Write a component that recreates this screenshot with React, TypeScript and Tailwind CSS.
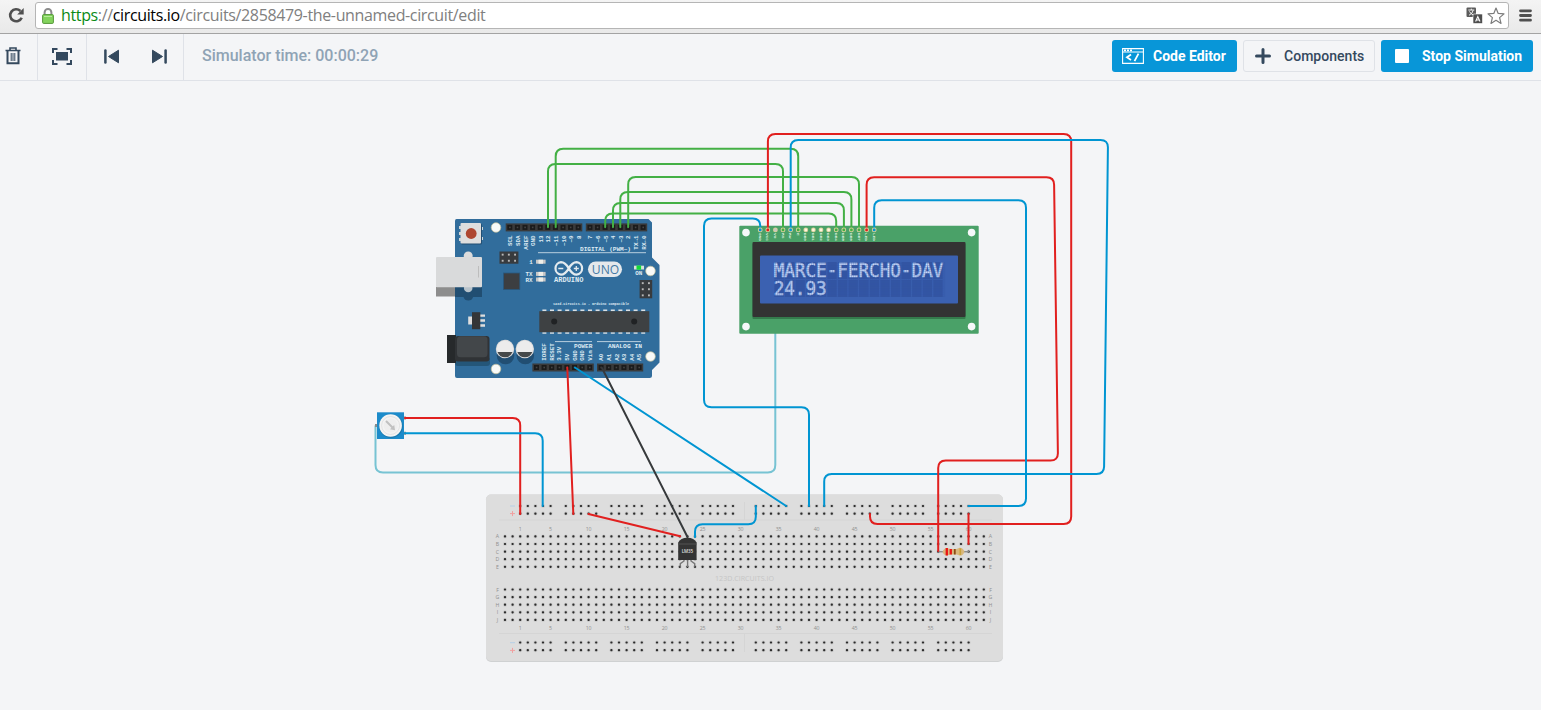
import React from "react";

type Point = [number, number];

const PITCH = 7.6;
const X0 = 505;
const col = (n: number) => X0 + n * PITCH;
const TOP_ROWS = [536.4, 544, 551.6, 559.2, 566.8];
const BOTTOM_ROWS = [589.5, 597.1, 604.7, 612.3, 619.9];
const RAIL_ROWS = [506, 513.6, 642.5, 650.2];
const RAIL_GROUPS = [2, 8, 14, 20, 26, 33, 39, 45, 51, 57];
const MONO = '"Liberation Mono", monospace';
const LABEL = '"Open Sans", sans-serif';

function rounded(points: Point[], r = 7.5) {
  let d = `M${points[0][0]} ${points[0][1]}`;
  for (let i = 1; i < points.length - 1; i++) {
    const [ax, ay] = points[i - 1];
    const [bx, by] = points[i];
    const [cx, cy] = points[i + 1];
    const la = Math.hypot(ax - bx, ay - by);
    const lc = Math.hypot(cx - bx, cy - by);
    const q = Math.min(r, la, lc);
    d += `L${bx + ((ax - bx) * q) / la} ${by + ((ay - by) * q) / la}`;
    d += `Q${bx} ${by} ${bx + ((cx - bx) * q) / lc} ${by + ((cy - by) * q) / lc}`;
  }
  const end = points[points.length - 1];
  return `${d}L${end[0]} ${end[1]}`;
}

function Wire({ color, points }: { color: string; points: Point[] }) {
  return <path d={rounded(points)} fill="none" stroke={color} strokeWidth={2} strokeLinecap="round" />;
}

const GREEN = "#43b045";
const RED = "#e1201f";
const BLUE = "#0095d2";

function Hole({ x, y }: { x: number; y: number }) {
  return (
    <g>
      <circle cx={x} cy={y} r={2} fill="#cbcbcb" />
      <rect x={x - 1.1} y={y - 1.1} width={2.2} height={2.2} rx={0.8} fill="#2c2c2c" />
    </g>
  );
}

function Breadboard() {
  const columns = Array.from({ length: 64 }, (_, i) => i);
  const numbers = [1, 5, 10, 15, 20, 25, 30, 35, 40, 45, 50, 55, 60];
  return (
    <g>
      <rect x={486} y={494.5} width={517} height={167.5} rx={5} fill="#cfd1d2" />
      <rect x={486} y={494.5} width={517} height={166.5} rx={5} fill="#dddddd" />
      <path d="M499 520H992M499 633.5H992M744.5 502v18M744.5 634v18" stroke="#d5d5d5" strokeWidth={1} />
      {columns.map((c) => [...TOP_ROWS, ...BOTTOM_ROWS].map((y) => <Hole key={`${c}-${y}`} x={col(c)} y={y} />))}
      {RAIL_GROUPS.map((g) =>
        [0, 1, 2, 3, 4].map((k) => RAIL_ROWS.map((y) => <Hole key={`${g}-${k}-${y}`} x={col(g + k)} y={y} />))
      )}
      <g fontFamily={LABEL} fontSize={5.2} fill="#909090" textAnchor="middle">
        {numbers.map((n) => (
          <g key={n}>
            <text x={col(n + 1)} y={531.3}>{n}</text>
            <text x={col(n + 1)} y={630}>{n}</text>
          </g>
        ))}
        {["A", "B", "C", "D", "E", "F", "G", "H", "I", "J"].map((l, i) => {
          const y = [...TOP_ROWS, ...BOTTOM_ROWS][i] + 2;
          return (
            <g key={l}>
              <text x={497.5} y={y}>{l}</text>
              <text x={990.5} y={y}>{l}</text>
            </g>
          );
        })}
      </g>
      <text x={744.5} y={581} fontFamily={LABEL} fontSize={7.8} fill="#c6c6c6" textAnchor="middle" textLength={59} lengthAdjust="spacingAndGlyphs">123D.CIRCUITS.IO</text>
      <path d="M510 506h5M510 642.7h5" stroke="#b5cfe6" strokeWidth={1} />
      <path d="M510 513.6h5M512.5 511.1v5M510 650.4h5M512.5 647.9v5" stroke="#f0a0a0" strokeWidth={1} />
    </g>
  );
}

function Header({ x, y, count }: { x: number; y: number; count: number }) {
  return (
    <g>
      <rect x={x} y={y} width={count * PITCH + 0.6} height={8} fill="#3a3a3a" />
      {Array.from({ length: count }, (_, i) => (
        <g key={i}>
          <rect x={x + 1.6 + i * PITCH} y={y + 1.5} width={5} height={5} fill="#1b1b1b" />
          <rect x={x + 3.4 + i * PITCH} y={y + 3.2} width={1.6} height={1.6} fill="#454545" />
        </g>
      ))}
    </g>
  );
}

function VText({ x, y, children, end }: { x: number; y: number; children: string; end?: boolean }) {
  return (
    <text transform={`translate(${x + 1.9} ${y}) rotate(-90)`} textAnchor={end ? "end" : "start"}>{children}</text>
  );
}

function PinBlock({ x, y, rows, cols }: { x: number; y: number; rows: number; cols: number }) {
  return (
    <g>
      <rect x={x} y={y} width={cols * 6.3} height={rows * 6.1} fill="#383b3e" />
      {Array.from({ length: rows * cols }, (_, i) => (
        <rect key={i} x={x + 2.2 + (i % cols) * 6.2} y={y + 2.2 + Math.floor(i / cols) * 6.1} width={1.9} height={1.9} fill="#b9b9b9" />
      ))}
    </g>
  );
}

function Arduino() {
  const topLeft = ["SCL", "SDA", "AREF", "GND", "13", "12", "~11", "~10", "~9", "8"];
  const topRight = ["7", "~6", "~5", "4", "~3", "2", "TX→1", "RX←0"];
  const power = ["IOREF", "RESET", "3.3V", "5V", "GND", "GND", "Vin"];
  return (
    <g>
      <path d="M456.5 219H648.5L652 222.5V257.5L659.5 265V362.5L652 370V375.5Q652 378 649.5 378H457Q455 378 455 376V221Q455 219 456.5 219Z" fill="#316d9c" />
      {/* USB socket */}
      <circle cx={468.2} cy={256} r={4.5} fill="#dcdcdc" />
      <path d="M463.5 297a5 5 0 0 0 9.6 0Z" fill="#214e72" />
      <rect x={436} y={287} width={19} height={9.5} fill="#8d8d8d" />
      <rect x={455} y={287} width={27} height={10} fill="#214e72" />
      <circle cx={468.2} cy={288} r={4.3} fill="#b8c3cb" />
      <rect x={436} y={257} width={46} height={30.3} rx={1} fill="#d9dadb" />
      <path d="M478.5 266v11.5" stroke="#bdbdbd" />
      {/* reset button */}
      <path d="M459 226h4v3h-4ZM459 232h4v3h-4ZM459 238h4v3h-4ZM480 227h3v3h-3ZM480 237h3v3h-3Z" fill="#cfd5d8" />
      <rect x={461} y={223.5} width={21} height={21} rx={1.5} fill="#234f73" />
      <rect x={460.5} y={223} width={20.5} height={20.5} rx={1} fill="#dedede" />
      <circle cx={471.2} cy={233.5} r={5.4} fill="#ae4630" />
      {([[496, 227.5], [650.5, 271], [650.5, 356.5], [496, 369]] as Point[]).map(([x, y]) => (
        <circle key={`${x}-${y}`} cx={x} cy={y} r={4.8} fill="#f8faf8" stroke="#c1bd98" strokeWidth={0.7} />
      ))}
      <Header x={505.7} y={223.4} count={10} />
      <Header x={585.8} y={223.4} count={8} />
      <Header x={532.4} y={363.5} count={8} />
      <Header x={597} y={363.5} count={6} />
      <g fontFamily={MONO} fontWeight={700} fontSize={5.9} fill="#dfebf3">
        {topLeft.map((t, i) => <VText key={t} x={510.5 + i * PITCH} y={235.5} end>{t}</VText>)}
        {topRight.map((t, i) => <VText key={t} x={590.4 + i * PITCH} y={235.5} end>{t}</VText>)}
        {power.map((t, i) => <VText key={i} x={544.2 + i * PITCH} y={360.8}>{t}</VText>)}
        {["A0", "A1", "A2", "A3", "A4", "A5"].map((t, i) => <VText key={t} x={601.4 + i * PITCH} y={360.8}>{t}</VText>)}
        <text x={580} y={250.7} textLength={51} lengthAdjust="spacingAndGlyphs">DIGITAL (PWM~)</text>
        <text x={574} y={348} textLength={18.3} lengthAdjust="spacingAndGlyphs">POWER</text>
        <text x={608} y={348} textLength={34} lengthAdjust="spacingAndGlyphs">ANALOG IN</text>
        <text x={529.3} y={263.5}>1</text>
        <text x={525.5} y={275.7}>TX</text>
        <text x={525.5} y={281.7}>RX</text>
        <text x={635.2} y={275.2}>ON</text>
        <text x={553} y={305.1} fontSize={4.1} textLength={76} lengthAdjust="spacingAndGlyphs">123d.circuits.io - arduino compatible</text>
        <text x={554} y={281.7} fontSize={6.3} textLength={29.5} lengthAdjust="spacingAndGlyphs">ARDUINO</text>
      </g>
      <path d="M538 252.7H646M555 341.6h37M597 341.6h44" stroke="#c7dae6" strokeWidth={0.9} />
      <PinBlock x={499.5} y={251.5} rows={2} cols={3} />
      <PinBlock x={639.6} y={280} rows={3} cols={2} />
      <rect x={503.5} y={273} width={16.3} height={16.5} fill="#3c3e41" stroke="#28587e" strokeWidth={0.8} />
      {[261.5, 273.7, 279.3].map((y) => (
        <g key={y}>
          <rect x={536} y={y - 1.8} width={9.6} height={4} fill="#c7c7c7" />
          <rect x={538.5} y={y - 1.8} width={4.5} height={4} fill="#efeee8" />
        </g>
      ))}
      <path d="M568.8 268.4C566.5 264.5 564.5 262.2 561 262.2A6.3 6.3 0 0 0 561 274.7C564.5 274.7 566.5 272.3 568.8 268.4C571 264.5 573 262.2 576.6 262.2A6.3 6.3 0 0 1 576.6 274.7C573 274.7 571 272.3 568.8 268.4Z" fill="none" stroke="#e4ebef" strokeWidth={2.2} />
      <path d="M558.3 268.5h5M573.8 268.5h5M576.3 266v5" stroke="#e4ebef" strokeWidth={1.3} />
      <rect x={588} y={261.5} width={34} height={15.5} rx={7.75} fill="#e5e9ec" />
      <text x={591.8} y={274} fontFamily={LABEL} fontSize={13} fill="#447aa4" textLength={27.4} lengthAdjust="spacingAndGlyphs">UNO</text>
      <rect x={634} y={265.7} width={10} height={3.8} fill="#d6e2d9" />
      <rect x={636.5} y={265.5} width={4.6} height={4.2} fill="#12dd39" />
      {/* microcontroller */}
      {Array.from({ length: 14 }, (_, i) => (
        <path key={i} d={`M${542.4 + i * 7.6} 310.4h4M${542.4 + i * 7.6} 333h4`} stroke="#dbe1e5" strokeWidth={1.6} />
      ))}
      <rect x={539.3} y={311.2} width={110} height={21} fill="#3e4143" />
      <circle cx={554.2} cy={321.5} r={3} fill="#202224" />
      <circle cx={634.2} cy={321.5} r={3} fill="#202224" />
      {/* regulator, power jack, capacitors */}
      <rect x={468.2} y={316.5} width={4} height={8} fill="#dedede" />
      <path d="M480 315.7h5M480 320.5h5M480 325.5h5" stroke="#dedede" strokeWidth={2.3} />
      <rect x={472} y={312.2} width={8.3} height={17} fill="#343638" />
      <rect x={455} y={357} width={35} height={9} rx={3} fill="#245679" />
      <rect x={447} y={335} width={9} height={28} fill="#26292b" />
      <rect x={455} y={336} width={34.5} height={25.5} rx={3} fill="#303336" />
      <rect x={457} y={336.3} width={30.5} height={21} rx={3.5} fill="#43474a" />
      {[505, 524.8].map((x) => (
        <g key={x}>
          <circle cx={x + 0.5} cy={355.5} r={8.8} fill="#214e72" />
          <circle cx={x} cy={349} r={9.2} fill="#dddddd" />
          <circle cx={x} cy={348.7} r={8} fill="#ececec" />
          <path d={`M${x - 7.5} 352a8 8 0 0 0 15 0Z`} fill="#45494a" />
        </g>
      ))}
    </g>
  );
}

const LCD_PINS: [string, string][] = [
  ["GND", BLUE], ["VCC", RED], ["VO", "#c7c7c7"], ["RS", GREEN], ["RW", BLUE], ["E", GREEN], ["DB0", "#fff6df"], ["DB1", "#fff6df"],
  ["DB2", "#fff6df"], ["DB3", "#fff6df"], ["DB4", GREEN], ["DB5", GREEN], ["DB6", GREEN], ["DB7", GREEN], ["LED", RED], ["LED", BLUE],
];

function LcdLine({ text, y }: { text: string; y: number }) {
  return (
    <text transform={`translate(773.7 ${y}) scale(0.905 1)`} fontFamily='"DejaVu Sans Mono", monospace' fontSize={19.6} fill="#d3e2ff" stroke="#d3e2ff" strokeWidth={0.45} textLength={(text.length * 10.6) / 0.905} lengthAdjust="spacing">
      {text}
    </text>
  );
}

function Lcd() {
  return (
    <g>
      <rect x={739.3} y={225.7} width={239.4} height={108} rx={1} fill="#4aa168" />
      {([[746, 232.6], [971.6, 232.6], [746, 326.6], [971.6, 326.6]] as Point[]).map(([x, y]) => (
        <circle key={`${x}-${y}`} cx={x} cy={y} r={3.8} fill="#f6f8fa" />
      ))}
      {LCD_PINS.map(([label], i) => (
        <text key={i} transform={`translate(${758.7 + i * 7.6} 233)  rotate(90)`} fontFamily={MONO} fontWeight={700} fontSize={4.4} fill="#d4eadb">{label}</text>
      ))}
      <rect x={752.5} y={243.5} width={213} height={75.5} rx={1} fill="#347b4c" />
      <rect x={752.5} y={242} width={213} height={75} rx={1} fill="#333333" />
      <rect x={760} y={255.5} width={198} height={48} rx={1} fill="#3b61b1" />
      {Array.from({ length: 32 }, (_, i) => (
        <rect key={i} x={774.4 + (i % 16) * 10.6} y={262 + Math.floor(i / 16) * 18} width={9.2} height={17} fill="#3456a4" />
      ))}
      <LcdLine text="MARCE-FERCHO-DAV" y={276.9} />
      <LcdLine text="24.93" y={294.7} />
      <path d={Array.from({ length: 90 }, (_, i) => `M${775.5 + i * 1.9} 262v35`).join("")} stroke="#3456a4" strokeWidth={0.3} />
      <path d={Array.from({ length: 17 }, (_, i) => `M774 ${263.5 + i * 2.05}h170`).join("")} stroke="#3456a4" strokeWidth={0.3} />
    </g>
  );
}

function LcdPins() {
  return (
    <g>
      {LCD_PINS.map(([, color], i) => (
        <g key={i}>
          <circle cx={760.2 + i * 7.6} cy={229.9} r={2.4} fill="#d8cf9b" />
          <rect x={758.9 + i * 7.6} y={228.6} width={2.6} height={2.6} rx={0.8} fill={color} />
        </g>
      ))}
    </g>
  );
}

function Potentiometer() {
  return (
    <g>
      <rect x={377} y={412.3} width={27} height={26.7} fill="#1c8bca" />
      <path d="M404 418h2M404 433.3h2M375 425.6h2" stroke="#8b8b8b" strokeWidth={3} />
      <circle cx={391} cy={426.2} r={11.8} fill="#1878ad" />
      <circle cx={390.6} cy={425.5} r={11.3} fill="#f3f3f3" />
      <circle cx={390.6} cy={425.5} r={9} fill="none" stroke="#dedede" strokeWidth={0.8} />
      <circle cx={390.6} cy={425.5} r={7} fill="#eeeeee" />
      <path d="M386 421l6.5 6.5" stroke="#c0c0c0" strokeWidth={2} />
      <path d="M395 430.3l-.8-5.2-4.2 4.2Z" fill="#c0c0c0" />
    </g>
  );
}

function Sensor() {
  return (
    <g>
      <path d="M684 559v2l-3.7 2.6v3.2M687.6 559v8M691 559v2l3.7 2.6v3.2" fill="none" stroke="#777777" strokeWidth={1.4} />
      <path d="M678.2 560V542.5Q680.5 537.8 687.4 537.8T696.6 542.5V560Z" fill="#343434" />
      <path d="M678.2 544H696.6" stroke="#5a5a5a" strokeWidth={0.8} />
      <text x={687.4} y={553.4} fontFamily={LABEL} fontWeight={600} fontSize={4.7} fill="#e4e4e4" textAnchor="middle" textLength={11.5} lengthAdjust="spacingAndGlyphs">LM35</text>
    </g>
  );
}

function Resistor() {
  return (
    <g>
      <path d="M938 551.7h31" stroke="#8d8d8d" strokeWidth={1.4} />
      <path d="M942.5 551.7q1.5-4 4.5-3.8l3.5 1h6l3-1.1q3.5-.2 5 3.9-1.5 4.1-5 3.9l-3-1.1h-6l-3.5 1q-3 .2-4.5-3.8Z" fill="#d9b77c" />
      <path d="M946.8 548v7.4M950.8 549v5.5" stroke="#ea1515" strokeWidth={2.3} />
      <path d="M954.8 549v5.5" stroke="#8b4b17" strokeWidth={1.8} />
      <path d="M960.3 548.3v6.8" stroke="#c8a23b" strokeWidth={1.6} />
    </g>
  );
}

function Circuit() {
  return (
    <svg className="block h-[629px] w-[1541px]" viewBox="0 81 1541 629">
      <Wire color="#77c3d3" points={[[775.3, 230], [775.3, 472.5], [375.5, 472.5], [375.5, 426]]} />
      <Breadboard />
      <Arduino />
      <Lcd />
      <Potentiometer />
      <Resistor />
      <Wire color={GREEN} points={[[555.7, 227], [555.7, 148.8], [798.2, 148.8], [798.2, 230]]} />
      <Wire color={GREEN} points={[[548, 227], [548, 164], [783, 164], [783, 230]]} />
      <Wire color={GREEN} points={[[628.2, 227], [628.2, 177], [859, 177], [859, 230]]} />
      <Wire color={GREEN} points={[[620.3, 227], [620.3, 191.9], [851.4, 191.9], [851.4, 230]]} />
      <Wire color={GREEN} points={[[613, 227], [613, 203.1], [843.9, 203.1], [843.9, 230]]} />
      <Wire color={GREEN} points={[[605.2, 227], [605.2, 213.5], [836.2, 213.5], [836.2, 230]]} />
      <Wire color={RED} points={[[767.9, 230], [767.9, 133.9], [1071.2, 133.9], [1071.2, 523.9], [870, 523.9], [870, 514]]} />
      <Wire color={BLUE} points={[[790.7, 230], [790.7, 140], [1108, 140], [1104, 474], [824.2, 474], [824.2, 506]]} />
      <Wire color={RED} points={[[866.6, 230], [866.6, 177.2], [1054, 177.2], [1058, 460.5], [938.2, 460.5], [938.2, 551]]} />
      <Wire color={BLUE} points={[[874.2, 230], [874.2, 200.3], [1026, 200.3], [1026, 506], [968.5, 506]]} />
      <Wire color={BLUE} points={[[760.3, 230], [760.3, 218.5], [704, 218.5], [704, 407.2], [809, 407.2], [809, 506]]} />
      <Wire color={RED} points={[[405, 418.1], [520.2, 418.1], [520.2, 514]]} />
      <Wire color={BLUE} points={[[405, 433.3], [542.7, 433.3], [542.7, 506]]} />
      <Wire color={RED} points={[[567.3, 367.5], [573.3, 514]]} />
      <Wire color={BLUE} points={[[574.9, 367.5], [786.2, 506]]} />
      <Wire color="#373a3c" points={[[602, 368], [687.5, 537]]} />
      <Wire color={RED} points={[[588.5, 514], [680.2, 536.3]]} />
      <Wire color={BLUE} points={[[695, 537], [695, 524.2], [755.8, 524.2], [755.8, 506]]} />
      <Wire color={RED} points={[[968.5, 514], [968.5, 544]]} />
      <LcdPins />
      <Sensor />
    </svg>
  );
}

function BrowserBar() {
  return (
    <header className="flex h-[34px] items-start border-b border-[#a3a3a3] bg-gradient-to-b from-[#f4f4f4] to-[#e9e9e9] pt-[2px]">
      <div className="flex h-[26px] w-[35px] shrink-0 items-center pl-[8px]">
        <svg className="size-[17px]" viewBox="0 0 17 17">
          <path d="M13.7 10.7A6 6 0 1 1 12.4 4" fill="none" stroke="#505050" strokeWidth="2.6" />
          <path d="M15.7 1v6.6H9.2Z" fill="#505050" />
        </svg>
      </div>
      <div className="flex h-[27px] w-[1474px] shrink-0 items-center rounded-[3px] border border-[#b5b5b5] bg-white pl-[6px] pr-[3px]">
        <svg className="mr-[7px] h-[16px] w-[12px] shrink-0" viewBox="0 0 12 16">
          <path d="M2.6 8V4.4a3.4 3.4 0 0 1 6.8 0V8" fill="none" stroke="#8b8b8b" strokeWidth="2" />
          <rect x=".6" y="6.6" width="10.8" height="8.8" rx="1" fill="#83d35d" stroke="#55983b" />
          <path d="M2 8.5h8" stroke="#b6eb9b" />
        </svg>
        <div className="flex-1 whitespace-nowrap pb-px font-['Open_Sans',sans-serif] text-[16px] leading-[22px] tracking-[-0.355px] text-[#808080]">
          <span className="text-[#0b8a16]">https</span>://<span className="text-black">circuits.io</span>/circuits/2858479-the-unnamed-circuit/edit
        </div>
        <svg className="mr-[4px] h-[17px] w-[17px]" viewBox="0 0 17 17">
          <rect x=".5" y=".5" width="9.5" height="9.5" rx="1" fill="#5b5b5b" />
          <path d="M2.3 3h6M5.3 1.6V3M3 8.3Q6.7 6.5 7.2 3.2M3.4 4.4Q4.8 7.3 8 8.3" fill="none" stroke="#fff" strokeWidth=".9" />
          <rect x="7" y="7" width="9.5" height="9.5" rx="1" fill="#4f4f4f" stroke="#fff" strokeWidth=".6" />
          <path d="M9.6 14.5l2.2-5 2.2 5M10.4 13h2.8" fill="none" stroke="#fff" strokeWidth="1.1" />
        </svg>
        <svg className="size-[18px]" viewBox="0 0 18 18">
          <path d="M9 1l2.2 5.4 5.8.5-4.4 3.7 1.4 5.8L9 13.3l-5 3.1 1.4-5.8L1 6.9l5.8-.5Z" fill="#fff" stroke="#7c7c7c" strokeWidth="1.2" strokeLinejoin="round" />
        </svg>
      </div>
      <div className="flex h-[26px] flex-1 items-center pl-[10px]">
        <svg className="h-[13px] w-[13px]" viewBox="0 0 13 13">
          <path d="M1.5 1.8h10M1.5 6.5h10M1.5 11.2h10" stroke="#4f4f4f" strokeWidth="2.8" strokeLinecap="round" />
        </svg>
      </div>
    </header>
  );
}

function SimulatorBar() {
  return (
    <nav className="flex h-[47px] border-b border-[#dfe2e8] font-[Roboto,sans-serif] text-[#34495e]">
      <div className="w-[38px] border-r border-[#dfe2e8] pl-[5px] pt-[13px]">
        <svg className="h-[18px] w-[16px]" viewBox="0 0 16 18" fill="none" stroke="#34495e">
          <path d="M.5 3.5h15M5 3V1h6v2" strokeWidth="1.6" />
          <path d="M2.5 4v12.3h11V4" strokeWidth="2" />
          <path d="M6.2 6v8M9.8 6v8M8 6v8" strokeWidth="1" />
        </svg>
      </div>
      <div className="w-[49px] border-r border-[#dfe2e8] pl-[14px] pt-[14px]">
        <svg className="h-[17px] w-[20px]" viewBox="0 0 20 17">
          <rect x="4" y="4" width="12" height="8.5" fill="#34495e" />
          <path d="M1 5V1h4.5M14.5 1H19v4M19 12v4h-4.5M5.5 16H1v-4" fill="none" stroke="#34495e" strokeWidth="2" />
        </svg>
      </div>
      <div className="flex w-[97px] justify-between border-r border-[#dfe2e8] pl-[17px] pr-[16px] pt-[15px]">
        <svg className="h-[15px] w-[16px]" viewBox="0 0 16 15">
          <path d="M1.4 1.5v12" stroke="#34495e" strokeWidth="2.5" strokeLinecap="round" />
          <path d="M14.5 1.2v12.6L4.5 7.5Z" fill="#34495e" stroke="#34495e" strokeLinejoin="round" />
        </svg>
        <svg className="h-[15px] w-[16px]" viewBox="0 0 16 15">
          <path d="M14.6 1.5v12" stroke="#34495e" strokeWidth="2.5" strokeLinecap="round" />
          <path d="M1.5 1.2v12.6l10-6.3Z" fill="#34495e" stroke="#34495e" strokeLinejoin="round" />
        </svg>
      </div>
      <div className="flex-1 pl-[18px] pt-[11px] text-[16px] font-medium leading-[22px] text-[#8fa3b5]">Simulator time: 00:00:29</div>
      <div className="flex gap-[6px] pr-[8px] pt-[6px] text-[14px] font-medium leading-[30px]">
        <button className="flex h-[32px] w-[125px] items-center rounded-[3px] bg-[#0896d8] pl-[10px] font-bold text-white">
          <svg className="mr-[9px] h-[16px] w-[22px]" viewBox="0 0 22 16">
            <path d="M.6.6h20.8v14.8H.6ZM.6 4h20.8" fill="none" stroke="#fff" strokeWidth="1.1" />
            <path d="M2 2.3h8" stroke="#fff" strokeWidth="1.8" strokeDasharray="2 1" />
            <path d="M9 6.5L5 9.2l4 2.7M16.5 5.7l-4 7.5" fill="none" stroke="#fff" strokeWidth="1.8" />
          </svg>
          <span className="pb-px">Code Editor</span>
        </button>
        <button className="flex h-[32px] w-[132px] items-center rounded-[3px] border border-[#dfe2e7] pl-[11px]">
          <svg className="mr-[13px] size-[16px]" viewBox="0 0 16 16">
            <path d="M8 1.5v13M1.5 8h13" stroke="#34495e" strokeWidth="3" strokeLinecap="round" />
          </svg>
          <span className="pb-px tracking-[0.03px]">Components</span>
        </button>
        <button className="flex h-[32px] w-[152px] items-center rounded-[3px] bg-[#0896d8] pl-[14px] font-bold text-white">
          <span className="mr-[13px] size-[14px] rounded-[1px] bg-white" />
          <span className="pb-px">Stop Simulation</span>
        </button>
      </div>
    </nav>
  );
}

export default function App() {
  return (
    <div className="h-[710px] w-[1541px] overflow-hidden bg-[#f4f5f7]">
      <BrowserBar />
      <SimulatorBar />
      <main>
        <Circuit />
      </main>
    </div>
  );
}
